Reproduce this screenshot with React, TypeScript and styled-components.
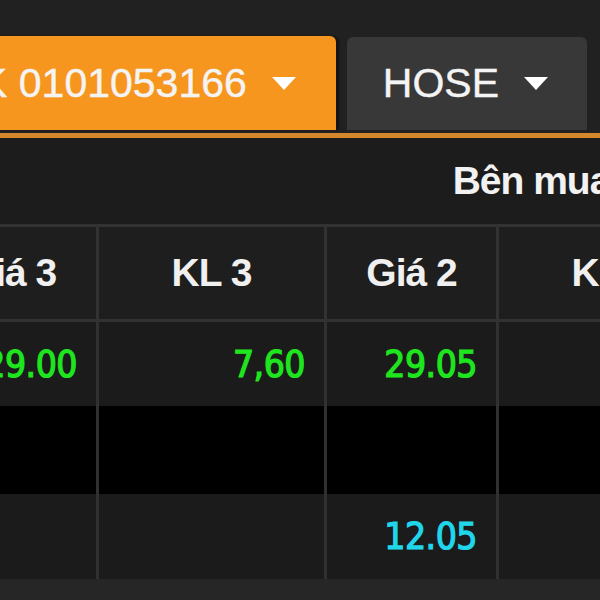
import styled, { createGlobalStyle } from "styled-components";

const GlobalStyle = createGlobalStyle`
  html, body {
    margin: 0;
    padding: 0;
    background: #202020;
  }
`;

const headers = ["Giá 3", "KL 3", "Giá 2", "KL 2", "Giá 1", "KL 1"];

const rows = [
  { tone: "#1b1b1b", height: 84, cells: [{ v: "29.00", c: "#1fe51f" }, { v: "7,60", c: "#1fe51f" }, { v: "29.05", c: "#1fe51f" }, { v: "" }, { v: "" }, { v: "" }] },
  { tone: "#000000", height: 88, cells: [{ v: "" }, { v: "" }, { v: "" }, { v: "" }, { v: "" }, { v: "" }] },
  { tone: "#1b1b1b", height: 85, cells: [{ v: "" }, { v: "" }, { v: "12.05", c: "#20d6ea" }, { v: "" }, { v: "" }, { v: "" }] },
];

const App = () => {
  return (
    <>
      <GlobalStyle />
      <Screen>
        <TabBar>
          <Tab active>
            <TabLabel>TK 0101053166</TabLabel>
            <Caret />
          </Tab>
          <Tab>
            <TabLabel>HOSE</TabLabel>
            <Caret />
          </Tab>
        </TabBar>
        <Rule />
        <Board>
          <GroupHead>Bên mua</GroupHead>
          {headers.map((h) => (
            <HeadCell key={h}>{h}</HeadCell>
          ))}
          {rows.map((row, r) =>
            row.cells.map((cell, i) => (
              <DataCell key={`${r}-${i}`} tone={row.tone} h={row.height} color={cell.c}>
                {cell.v}
              </DataCell>
            ))
          )}
        </Board>
        <Footer />
      </Screen>
    </>
  );
};

export default App;

const Screen = styled.div`
  width: 600px;
  height: 600px;
  overflow: hidden;
  background: #202020;
  display: flex;
  flex-direction: column;
`;

const TabBar = styled.div`
  display: flex;
  align-items: flex-end;
  gap: 11px;
  height: 130px;
  margin-left: -76px;
  padding-bottom: 3px;
  background: #212121;
`;

const Tab = styled.div<{ active?: boolean }>`
  flex: none;
  display: flex;
  align-items: center;
  gap: 25px;
  height: ${({ active }) => (active ? 94 : 93)}px;
  padding: ${({ active }) => (active ? "0 40px 0 31px" : "0 39px 0 36px")};
  border-radius: 6px 6px 0 0;
  background: ${({ active }) => (active ? "#f7961e" : "#383838")};
  box-shadow: ${({ active }) => (active ? "3px 0 2px #141414" : "none")};
  color: #f4f4f4;
  font-family: "Liberation Sans", Arial, sans-serif;
  font-size: 41px;
  -webkit-text-stroke: 0.4px #f4f4f4;
  white-space: nowrap;
`;

const TabLabel = styled.span`
  line-height: 1;
`;

const Caret = styled.span`
  width: 0;
  height: 0;
  border-left: 12px solid transparent;
  border-right: 12px solid transparent;
  border-top: 13px solid #ffffff;
`;

const Rule = styled.div`
  height: 5px;
  background: #d5872c;
  flex: none;
`;

const Board = styled.div`
  display: grid;
  grid-template-columns: 173px 228px 172px 228px 172px 228px;
  margin-left: -74px;
  width: 1201px;
  flex: none;
  font-family: "Liberation Sans", Arial, sans-serif;
`;

const GroupHead = styled.div`
  grid-column: 1 / -1;
  height: 89px;
  box-sizing: border-box;
  padding-left: 10px;
  display: flex;
  align-items: center;
  justify-content: center;
  background: #1c1c1c;
  border-bottom: 3px solid #323232;
  color: #f2f2f2;
  font-weight: 700;
  font-size: 39px;
  letter-spacing: -1px;
`;

const HeadCell = styled.div`
  height: 95px;
  box-sizing: border-box;
  display: flex;
  align-items: center;
  justify-content: center;
  background: #1e1e1e;
  border-right: 3px solid #323232;
  border-bottom: 3px solid #323232;
  color: #f0f0f0;
  font-weight: 700;
  font-size: 39px;
  letter-spacing: -1px;
`;

const DataCell = styled.div<{ tone: string; h: number; color?: string }>`
  height: ${({ h }) => h}px;
  box-sizing: border-box;
  display: flex;
  align-items: center;
  justify-content: flex-end;
  padding-right: 19px;
  background: ${({ tone }) => tone};
  border-right: 3px solid #303030;
  color: ${({ color }) => color || "#1fe51f"};
  -webkit-text-stroke: 1.2px ${({ color }) => color || "#1fe51f"};
  font-family: "DejaVu Sans Condensed", "DejaVu Sans", sans-serif;
  font-size: 37px;
  letter-spacing: -0.5px;
`;

const Footer = styled.div`
  flex: 1;
  background: #262626;
`;
